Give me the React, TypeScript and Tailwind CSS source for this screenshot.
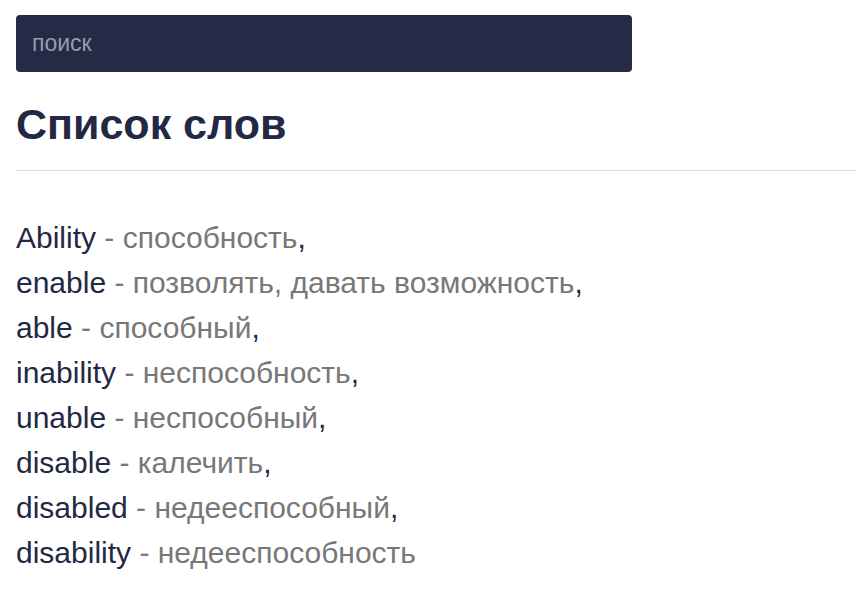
const words: [string, string][] = [
  ["Ability", "способность"],
  ["enable", "позволять, давать возможность"],
  ["able", "способный"],
  ["inability", "неспособность"],
  ["unable", "неспособный"],
  ["disable", "калечить"],
  ["disabled", "недееспособный"],
  ["disability", "недееспособность"],
];

export default function App() {
  return (
    <div className="min-h-screen bg-white pl-4 pt-[15px] font-['Liberation_Sans',Arial,sans-serif] text-[#232844]">
      <input
        type="text"
        placeholder="поиск"
        autoFocus
        className="block h-[57px] w-[616px] rounded bg-[#252a46] px-4 text-[23px] text-white caret-white outline-none placeholder:text-[#9a9ca8]"
      />
      <h1 className="mt-[28px] text-[43px] font-bold leading-[48px]">Список слов</h1>
      <hr className="mt-[22px] border-0 border-t border-[#d6e0ea]" />
      <ul className="mt-[44px] text-[30px] leading-[45px]">
        {words.map(([word, translation], i) => (
          <li key={word}>
            {word}
            <span className="text-[#787878]">
              {" - "}
              {translation}
            </span>
            {i < words.length - 1 && ","}
          </li>
        ))}
      </ul>
    </div>
  );
}
